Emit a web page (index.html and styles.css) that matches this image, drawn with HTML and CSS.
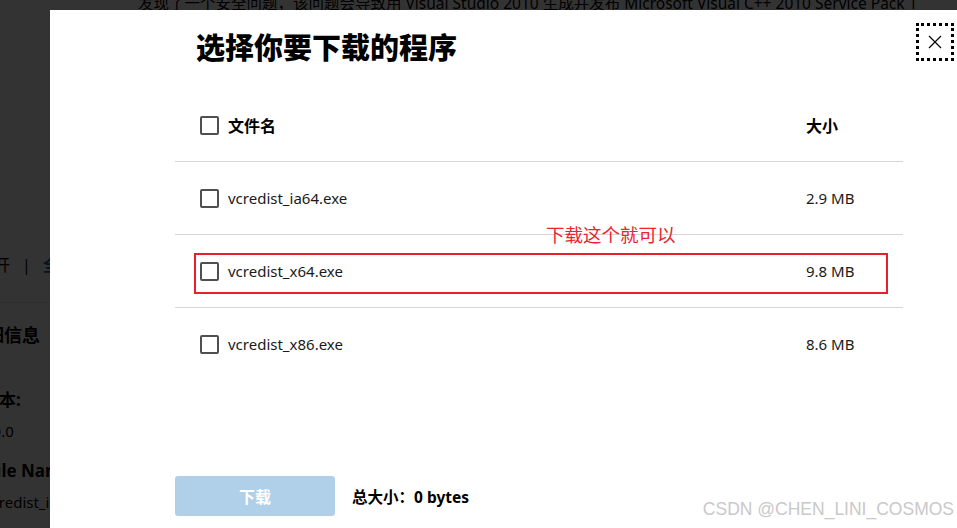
FILE: index.html
```html
<!DOCTYPE html>
<html lang="zh-CN">
<head>
  <meta charset="UTF-8" />
  <meta name="viewport" content="width=device-width, initial-scale=1.0"/>
  <title>下载 Microsoft Visual C++ 2010 Service Pack 1</title>
  <link rel="stylesheet" href="styles.css">
</head>
<body>
  <div class="page">
    <p class="page-intro">发现了一个安全问题，该问题会导致用 Visual Studio 2010 生成并发布 Microsoft Visual C++ 2010 Service Pack 1</p>
    <div class="page-links">
      <span>展开</span><span class="sep">|</span><span class="link">全部展开</span>
    </div>
    <div class="page-details">
      <h3 class="detail-heading">详细信息</h3>
      <div class="detail-label">版本:</div>
      <div class="detail-value">10.0</div>
      <div class="detail-label en">File Name:</div>
      <div class="detail-value">vcredist_ia64.exe</div>
    </div>
  </div>

  <div class="backdrop"></div>

  <div class="modal">
    <button class="close-btn" aria-label="关闭">
      <svg width="14" height="14" viewBox="0 0 14 14"><path d="M1 1 L13 13 M13 1 L1 13" stroke="#000" stroke-width="1.2" fill="none"/></svg>
    </button>

    <h2 class="modal-title">选择你要下载的程序</h2>

    <div class="file-table">
      <div class="file-row head">
        <label class="file-name"><span class="check"></span>文件名</label>
        <div class="file-size">大小</div>
      </div>
      <div class="file-row">
        <label class="file-name"><span class="check"></span>vcredist_ia64.exe</label>
        <div class="file-size">2.9 MB</div>
      </div>
      <div class="file-row marked">
        <label class="file-name"><span class="check"></span>vcredist_x64.exe</label>
        <div class="file-size">9.8 MB</div>
        <div class="mark-box"></div>
        <div class="mark-note">下载这个就可以</div>
      </div>
      <div class="file-row">
        <label class="file-name"><span class="check"></span>vcredist_x86.exe</label>
        <div class="file-size">8.6 MB</div>
      </div>
    </div>

    <div class="modal-footer">
      <button class="download-btn" disabled>下载</button>
      <span class="total">总大小：0 bytes</span>
    </div>
  </div>

  <div class="watermark">CSDN @CHEN_LINI_COSMOS</div>
</body>
</html>
```

FILE: styles.css
```css
* {
  margin: 0;
  padding: 0;
  box-sizing: border-box;
}

body, html {
  height: 100%;
  width: 100%;
  overflow: hidden;
  font-family: 'Noto Sans', 'Noto Sans CJK SC', sans-serif;
  background-color: #fff;
  color: #1a1a1a;
}

/* page behind the dialog */
.page {
  position: relative;
}

.page-intro {
  font-size: 15.5px;
  line-height: 22px;
  margin: -8px 0 0 138px;
  white-space: nowrap;
  color: #000;
}

.page-links {
  margin: 240px 0 0 -22px;
  font-size: 16px;
  line-height: 22px;
  padding-bottom: 26px;
  border-bottom: 1px solid #e6e6e6;
  color: #000;
}

.page-links .sep {
  margin: 0 12px;
}

.page-links .link {
  color: #0067b8;
  font-weight: 700;
}

.page-details {
  margin-left: -16px;
}

.detail-heading {
  font-size: 18px;
  font-weight: 700;
  margin: 18px 0 0 -16px;
  color: #000;
}

.detail-label {
  font-size: 17px;
  font-weight: 700;
  margin-top: 39px;
  margin-left: -2px;
  color: #000;
}

.detail-label.en {
  margin-top: 18px;
  margin-left: 3px;
}

.detail-value {
  font-size: 15px;
  margin-top: 10px;
  color: #000;
}

.backdrop {
  position: fixed;
  inset: 0;
  background: rgba(0, 0, 0, 0.8);
}

/* dialog */
.modal {
  position: absolute;
  left: 50px;
  top: 10px;
  width: 907px;
  height: 540px;
  background: #fff;
  padding: 18px 54px 0 125px;
}

.close-btn {
  position: absolute;
  top: 13px;
  right: 3px;
  width: 38px;
  height: 38px;
  border: 3px dotted #000;
  background: #fff;
  display: flex;
  align-items: center;
  justify-content: center;
  cursor: pointer;
}

.modal-title {
  font-size: 29px;
  font-weight: 800;
  line-height: 40px;
  color: #000;
  margin-left: 21px;
}

.file-table {
  margin-top: 21px;
}

.file-row {
  position: relative;
  display: grid;
  grid-template-columns: 1fr 97px;
  align-items: center;
  height: 73px;
  border-top: 1px solid #d6d6d6;
  font-size: 15px;
  color: #1a1a1a;
}

.file-row.head {
  height: 72px;
  border-top: none;
  font-size: 16px;
  font-weight: 700;
  color: #000;
}

.file-name {
  display: flex;
  align-items: center;
  gap: 9px;
  padding-left: 25px;
}

.check {
  width: 19px;
  height: 19px;
  border: 2px solid #505050;
  border-radius: 2px;
}

/* red annotation */
.mark-box {
  position: absolute;
  left: 19px;
  right: 15px;
  top: 18px;
  height: 41px;
  border: 2px solid #e8202d;
}

.mark-note {
  position: absolute;
  left: 371px;
  top: -12px;
  font-size: 18.5px;
  line-height: 24px;
  color: #ec2230;
}

.modal-footer {
  display: flex;
  align-items: center;
  gap: 17px;
  margin-top: 96px;
}

.download-btn {
  width: 160px;
  height: 40px;
  border: none;
  border-radius: 3px;
  background: #b0d0ea;
  color: #fff;
  font-family: inherit;
  font-size: 16px;
  font-weight: 700;
}

.total {
  font-size: 15.5px;
  font-weight: 700;
  color: #000;
}

.watermark {
  position: absolute;
  right: 3px;
  bottom: 8px;
  font-family: 'Liberation Sans', Arial, sans-serif;
  font-size: 17.5px;
  color: #c9c9c9;
}
```
